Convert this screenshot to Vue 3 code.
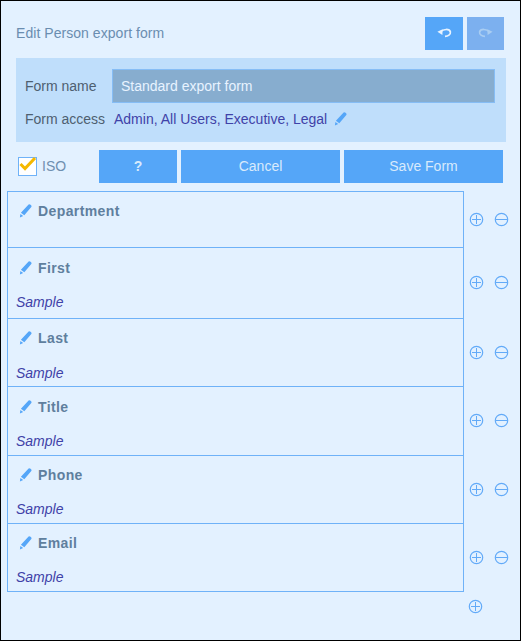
<script setup>
const rows = [
  { name: 'Department', sample: '', h: 56, pad: 11, gap: 18 },
  { name: 'First', sample: 'Sample', h: 71, pad: 12, gap: 18 },
  { name: 'Last', sample: 'Sample', h: 68, pad: 11, gap: 19 },
  { name: 'Title', sample: 'Sample', h: 69, pad: 12, gap: 18 },
  { name: 'Phone', sample: 'Sample', h: 68, pad: 11, gap: 18 },
  { name: 'Email', sample: 'Sample', h: 68, pad: 11, gap: 18 }
]
const pencil = 'M9.6 0.4 Q10.6 0 11.6 0.8 L12.3 1.5 Q12.9 2.3 12.3 3.1 L5.3 11.2 L1.9 8.8 Z M1.4 9.9 L4.2 11.9 L0.9 13.4 Z'
</script>

<template>
  <div class="page">
    <header class="head">
      <span class="title">Edit Person export form</span>
      <div class="history">
        <button class="btn undo" aria-label="Undo">
          <svg width="15" height="10" viewBox="0 0 15 10"><path d="M4 3.6 C6 1 12.6 0.4 13.4 4 C13.8 6.6 11 8.2 8 8.4" fill="none" stroke="#e8f3ff" stroke-width="1.7"/><path d="M0.4 3.8 L5.6 1.2 L5.4 7 Z" fill="#e8f3ff"/></svg>
        </button>
        <button class="btn redo" aria-label="Redo">
          <svg width="15" height="10" viewBox="0 0 15 10"><path d="M11 3.6 C9 1 2.4 0.4 1.6 4 C1.2 6.6 4 8.2 7 8.4" fill="none" stroke="#a9cdf2" stroke-width="1.7"/><path d="M14.6 3.8 L9.4 1.2 L9.6 7 Z" fill="#a9cdf2"/></svg>
        </button>
      </div>
    </header>

    <section class="panel">
      <div class="panel-row name-row">
        <span class="label">Form name</span>
        <div class="input">Standard export form</div>
      </div>
      <div class="panel-row access-row">
        <span class="label">Form access</span>
        <span class="access">Admin, All Users, Executive, Legal</span>
        <svg class="pen access-pen" width="14" height="14" viewBox="0 0 14 14"><path :d="pencil" fill="#55a6f8"/></svg>
      </div>
    </section>

    <div class="toolbar">
      <label class="iso">
        <span class="check">
          <svg width="20" height="18" viewBox="0 0 20 18"><path d="M2.5 8 L7 12.5 L17 2" fill="none" stroke="#f5b800" stroke-width="3"/></svg>
        </span>
        <span class="iso-text">ISO</span>
      </label>
      <button class="btn help">?</button>
      <button class="btn cancel">Cancel</button>
      <button class="btn save">Save Form</button>
    </div>

    <div class="list">
      <div v-for="(row, i) in rows" :key="row.name" class="row" :style="{ height: row.h + 'px' }">
        <div class="cell" :class="{ last: i === rows.length - 1 }" :style="{ paddingTop: row.pad + 'px' }">
          <div class="field">
            <svg class="pen" width="14" height="14" viewBox="0 0 14 14"><path :d="pencil" fill="#55a6f8"/></svg>
            <span class="field-name">{{ row.name }}</span>
          </div>
          <div v-if="row.sample" class="sample" :style="{ marginTop: row.gap + 'px' }">{{ row.sample }}</div>
        </div>
        <div class="actions">
          <svg class="round" width="15" height="15" viewBox="0 0 15 15"><circle cx="7.5" cy="7.5" r="6.2" fill="none" stroke="#62aaf8" stroke-width="1.2"/><path d="M7.5 3 V12 M3 7.5 H12" stroke="#62aaf8"/></svg>
          <svg class="round" width="15" height="15" viewBox="0 0 15 15"><circle cx="7.5" cy="7.5" r="6.2" fill="none" stroke="#62aaf8" stroke-width="1.2"/><path d="M2 7.5 H13" stroke="#62aaf8"/></svg>
        </div>
      </div>
      <div class="add">
        <svg width="15" height="15" viewBox="0 0 15 15"><circle cx="7.5" cy="7.5" r="6.2" fill="none" stroke="#62aaf8" stroke-width="1.2"/><path d="M7.5 3 V12 M3 7.5 H12" stroke="#62aaf8"/></svg>
      </div>
    </div>
  </div>
</template>

<style scoped>
.page {
  box-sizing: border-box;
  width: 521px;
  height: 641px;
  border: 1px solid #000;
  background: #e3f1ff;
  font-family: "Liberation Sans", Arial, sans-serif;
  font-size: 14px;
  padding: 16px 0 0 6px;
  overflow: hidden;
}
.head {
  display: flex;
  align-items: center;
  justify-content: space-between;
  height: 33px;
  padding: 0 16px 0 9px;
}
.title { color: #6a8db0; letter-spacing: 0.05px; padding-bottom: 1px; }
.history { display: flex; gap: 4px; }
.btn {
  border: 0;
  padding: 0 0 1px;
  margin: 0;
  height: 33px;
  background: #55a6f8;
  color: #d8eafc;
  font: inherit;
  display: flex;
  align-items: center;
  justify-content: center;
}
.undo { width: 38px; }
.redo { width: 37px; background: #7cb0ef; }
.panel {
  margin: 8px 8px 0 9px;
  width: 490px;
  height: 84px;
  box-sizing: border-box;
  background: #bfdefb;
  padding: 11px 11px 0 9px;
}
.panel-row { display: flex; align-items: center; }
.label { color: #4e5f70; width: 87px; flex: none; }
.name-row { height: 34px; }
.input {
  box-sizing: border-box;
  flex: 1;
  height: 34px;
  line-height: 32px;
  background: #87adcf;
  border: 1px solid #86bdf5;
  color: #e8f3ff;
  padding-left: 8px;
}
.access-row { height: 32px; }
.access { color: #3f42a8; margin-left: 2px; }
.toolbar {
  display: flex;
  align-items: center;
  gap: 4px;
  height: 33px;
  margin: 8px 0 0 11px;
}
.iso {
  display: flex;
  align-items: center;
  width: 77px;
  flex: none;
}
.check {
  box-sizing: border-box;
  width: 19px;
  height: 19px;
  border: 1px solid #6fb2f8;
  background: #fff;
  position: relative;
  flex: none;
}
.check svg { position: absolute; left: -1px; top: -2px; }
.iso-text { color: #6f8fb0; margin-left: 5px; padding-bottom: 1px; }
.help { width: 78px; font-weight: bold; }
.cancel { width: 159px; }
.save { width: 159px; }
.list { margin-top: 8px; }
.row { display: flex; align-items: center; }
.cell {
  box-sizing: border-box;
  width: 457px;
  height: 100%;
  flex: none;
  border: 1px solid #6fb2f8;
  border-bottom: 0;
  padding-left: 8px;
}
.cell.last { height: calc(100% + 1px); border-bottom: 1px solid #6fb2f8; }
.field { display: flex; align-items: center; height: 16px; }
.field-name { color: #5f7f9e; font-weight: bold; margin-left: 5px; letter-spacing: 0.4px; }
.pen { flex: none; margin-left: 3px; }
.access-pen { margin-left: 7px; }
.sample {
  color: #3f42a8;
  font-style: italic;
}
.actions {
  display: flex;
  gap: 10px;
  margin-left: 5px;
}
.round { display: block; }
.add { margin: 8px 0 0 461px; line-height: 0; }
</style>

<style>
html, body { margin: 0; padding: 0; }
</style>
